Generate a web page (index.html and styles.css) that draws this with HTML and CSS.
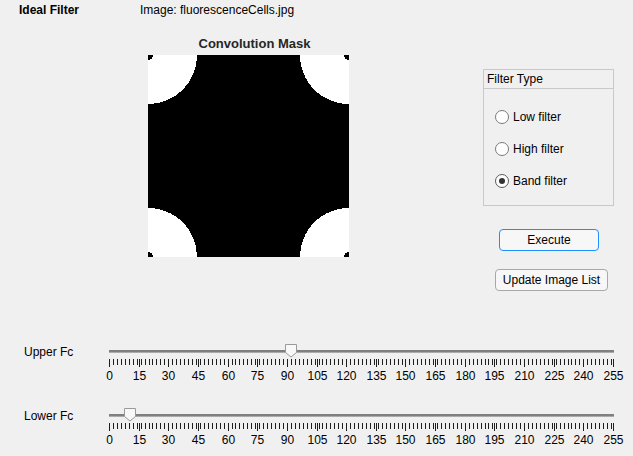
FILE: index.html
```html
<!DOCTYPE html>
<html lang="en">
<head>
<meta charset="utf-8">
<title>Ideal Filter</title>
<link rel="stylesheet" href="styles.css">
</head>
<body>
<div class="app">
  <header class="top">
    <span class="app-title">Ideal Filter</span>
    <span class="img-name">Image: fluorescenceCells.jpg</span>
  </header>

  <div class="middle">
    <figure class="axes">
      <div class="axes-title">Convolution Mask</div>
      <svg class="mask" width="201" height="202" viewBox="0 0 201 202" shape-rendering="crispEdges">
        <rect x="0" y="0" width="201" height="202" fill="#000"/>
        <circle cx="0" cy="0" r="49" fill="#fff"/>
        <circle cx="201" cy="0" r="49" fill="#fff"/>
        <circle cx="0" cy="202" r="49" fill="#fff"/>
        <circle cx="201" cy="202" r="49" fill="#fff"/>
        <circle cx="0" cy="0" r="5" fill="#000"/>
        <circle cx="201" cy="0" r="5" fill="#000"/>
        <circle cx="0" cy="202" r="5" fill="#000"/>
        <circle cx="201" cy="202" r="5" fill="#000"/>
      </svg>
    </figure>

    <aside class="controls">
      <div class="panel">
        <div class="panel-title">Filter Type</div>
        <div class="radio-list">
          <div class="radio"><span class="radio-circle"></span><span class="radio-label">Low filter</span></div>
          <div class="radio"><span class="radio-circle"></span><span class="radio-label">High filter</span></div>
          <div class="radio"><span class="radio-circle checked"></span><span class="radio-label">Band filter</span></div>
        </div>
      </div>
      <button class="btn btn-execute">Execute</button>
      <button class="btn btn-update">Update Image List</button>
    </aside>
  </div>

  <section class="sliders">
    <div class="slider-row">
      <span class="slider-label">Upper Fc</span>
      <svg class="slider-svg" width="525" height="46" viewBox="0 0 525 46">
        <rect x="7" y="10" width="505" height="2" fill="#808080"/>
        <rect x="7" y="12" width="505" height="1" fill="#ababab"/>
        <g class="ticks"></g>
        <g class="tick-labels">
          <text x="7.5" y="40">0</text><text x="37.5" y="40">15</text><text x="66.5" y="40">30</text>
          <text x="96.5" y="40">45</text><text x="126.5" y="40">60</text><text x="155.5" y="40">75</text>
          <text x="185.5" y="40">90</text><text x="215.5" y="40">105</text><text x="244.5" y="40">120</text>
          <text x="274.5" y="40">135</text><text x="303.5" y="40">150</text><text x="333.5" y="40">165</text>
          <text x="363.5" y="40">180</text><text x="392.5" y="40">195</text><text x="422.5" y="40">210</text>
          <text x="452.5" y="40">225</text><text x="481.5" y="40">240</text><text x="511.5" y="40">255</text>
        </g>
        <polygon class="thumb" points="183.5,4.5 194.5,4.5 194.5,12.5 189,17 183.5,12.5"/>
      </svg>
    </div>
    <div class="slider-row">
      <span class="slider-label">Lower Fc</span>
      <svg class="slider-svg" width="525" height="46" viewBox="0 0 525 46">
        <rect x="7" y="10" width="505" height="2" fill="#808080"/>
        <rect x="7" y="12" width="505" height="1" fill="#ababab"/>
        <g class="ticks"></g>
        <g class="tick-labels">
          <text x="7.5" y="40">0</text><text x="37.5" y="40">15</text><text x="66.5" y="40">30</text>
          <text x="96.5" y="40">45</text><text x="126.5" y="40">60</text><text x="155.5" y="40">75</text>
          <text x="185.5" y="40">90</text><text x="215.5" y="40">105</text><text x="244.5" y="40">120</text>
          <text x="274.5" y="40">135</text><text x="303.5" y="40">150</text><text x="333.5" y="40">165</text>
          <text x="363.5" y="40">180</text><text x="392.5" y="40">195</text><text x="422.5" y="40">210</text>
          <text x="452.5" y="40">225</text><text x="481.5" y="40">240</text><text x="511.5" y="40">255</text>
        </g>
        <polygon class="thumb" points="22.5,4.5 33.5,4.5 33.5,12.5 28,17 22.5,12.5"/>
      </svg>
    </div>
  </section>
</div>
<script src="script.js"></script>
</body>
</html>
```

FILE: styles.css
```css
html, body {
  margin: 0;
  padding: 0;
  background: #f0f0f0;
  overflow: hidden;
}

body {
  font-family: "Liberation Sans", Arial, sans-serif;
  font-size: 12px;
  color: #000;
}

.app {
  width: 633px;
  height: 456px;
}

.top {
  display: flex;
  height: 21px;
  line-height: 21px;
  padding-left: 19px;
}

.app-title {
  font-weight: bold;
  width: 121px;
}

.middle {
  display: flex;
  align-items: flex-start;
}

.axes {
  margin: 15px 0 0 148px;
  width: 213px;
}

.axes-title {
  font-size: 13px;
  font-weight: bold;
  line-height: 15px;
  height: 15px;
  text-align: center;
  color: #262626;
}

.mask {
  display: block;
  margin-top: 4px;
}

.controls {
  display: flex;
  flex-direction: column;
  align-items: flex-start;
  margin: 48px 0 0 122px;
}

.panel {
  box-sizing: border-box;
  width: 131px;
  height: 137px;
  border: 1px solid #c9c9c9;
}

.panel-title {
  height: 18px;
  line-height: 18px;
  padding-left: 3px;
  border-bottom: 1px solid #c9c9c9;
}

.radio-list {
  padding: 12px 0 0 11px;
  display: flex;
  flex-direction: column;
}

.radio {
  display: flex;
  align-items: center;
  height: 32px;
}

.radio-circle {
  box-sizing: border-box;
  width: 14px;
  height: 14px;
  border: 1px solid #7a7a7a;
  border-radius: 50%;
  background: #fff;
  margin-right: 4px;
  display: flex;
  align-items: center;
  justify-content: center;
}

.radio-circle.checked {
  border-color: #5a5a5a;
}

.radio-circle.checked::after {
  content: "";
  width: 6px;
  height: 6px;
  border-radius: 50%;
  background: #333;
}

.btn {
  box-sizing: border-box;
  height: 22px;
  padding: 0;
  font-family: "Liberation Sans", Arial, sans-serif;
  font-size: 12px;
  color: #000;
  background: #f7f7f7;
  border: 1px solid #a8a8a8;
  border-radius: 4px;
}

.btn-execute {
  width: 100px;
  margin: 23px 0 0 16px;
  border-color: #1e8fff;
}

.btn-update {
  width: 113px;
  margin: 18px 0 0 12px;
}

.sliders {
  margin-top: 49px;
}

.slider-row {
  display: flex;
  align-items: flex-start;
}

.slider-row + .slider-row {
  margin-top: 18px;
}

.slider-label {
  box-sizing: border-box;
  width: 102px;
  padding-left: 24px;
  line-height: 24px;
}

.slider-svg {
  display: block;
}

.tick-labels text {
  font-family: "Liberation Sans", Arial, sans-serif;
  font-size: 12px;
  fill: #000;
  text-anchor: middle;
}

.thumb {
  fill: #f8f8f8;
  stroke: #9a9a9a;
  stroke-width: 1;
}
```

FILE: script.js
```js
(function () {
  var NS = "http://www.w3.org/2000/svg";
  var groups = document.querySelectorAll(".ticks");
  for (var i = 0; i < groups.length; i++) {
    var d = "";
    for (var v = 0; v <= 255; v++) {
      var major = v % 15 === 0;
      var minor = v % 2 === 0;
      if (!major && !minor) continue;
      var col = Math.floor(109.5 + v * 504 / 255);
      var x = col - 102 + 0.5;
      d += "M" + x + " 19V" + (major ? 27 : 25);
    }
    var p = document.createElementNS(NS, "path");
    p.setAttribute("d", d);
    p.setAttribute("stroke", "#1e1e1e");
    p.setAttribute("stroke-width", "1");
    p.setAttribute("fill", "none");
    p.setAttribute("shape-rendering", "crispEdges");
    groups[i].appendChild(p);
  }
})();
```
